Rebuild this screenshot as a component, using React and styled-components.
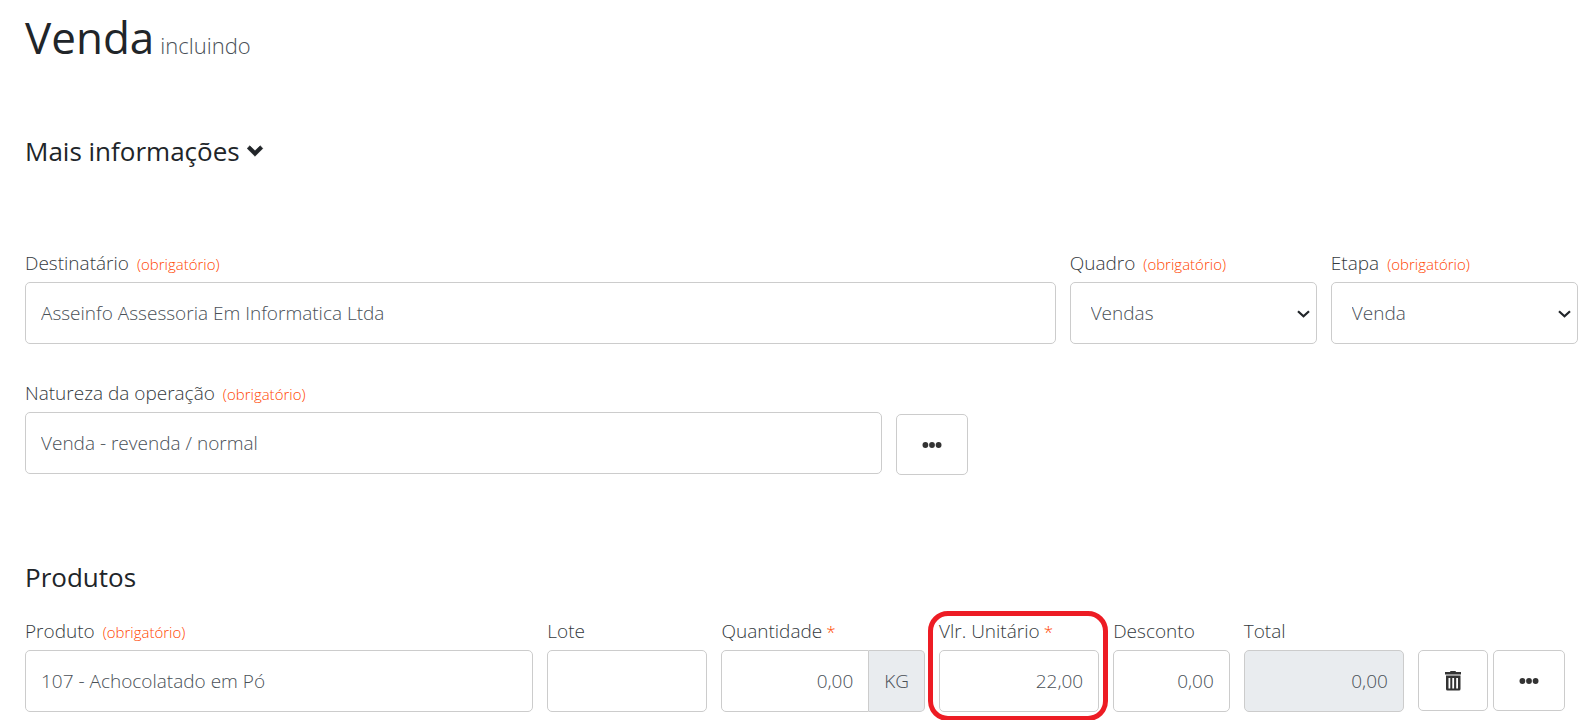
import React, { useState } from "react";
import styled, { createGlobalStyle, css } from "styled-components";

const GlobalStyle = createGlobalStyle`
    *, *::before, *::after {
        box-sizing: border-box;
    }

    body {
        margin: 0;
        background-color: #fff;
        color: #212529;
        font-family: "Open Sans", sans-serif;
        font-size: 19px;
        font-weight: 300;
        line-height: 28px;
    }
`;

function ChevronIcon() {
    return (
        <svg width="18" height="18" viewBox="0 0 18 18" aria-hidden="true">
            <path
                d="M9 14.200 L1.200 6.400 L3.800 3.800 L9 8.800 L14.200 3.800 L16.800 6.400 Z"
                fill="currentColor"
                stroke="currentColor"
                strokeWidth="0.6"
                strokeLinejoin="round"
            />
        </svg>
    );
}

function ArrowIcon() {
    return (
        <svg width="13" height="8" viewBox="0 0 13 8" aria-hidden="true">
            <path d="M1 1.200 L6.500 6.300 L12 1.200" fill="none" stroke="currentColor" strokeWidth="2.2" />
        </svg>
    );
}

function DotsIcon() {
    return (
        <svg width="20" height="20" viewBox="0 0 20 20" fill="currentColor" aria-hidden="true">
            <circle cx="3.4" cy="10" r="2.9" />
            <circle cx="10" cy="10" r="2.9" />
            <circle cx="16.6" cy="10" r="2.9" />
        </svg>
    );
}

function TrashIcon() {
    return (
        <svg width="18" height="20" viewBox="0 0 18 20" fill="currentColor" aria-hidden="true">
            <path d="M6.500 0h5l0.500 1h5v2.500H1V1h5z" />
            <path
                fillRule="evenodd"
                d="M2 4.500h14.500v13.500q0 1.500-1.500 1.500h-11.500Q2 19.500 2 18zM4.500 7v10.500h1.800V7zM8.300 7v10.500h1.800V7zM12.200 7v10.500h1.800V7z"
            />
        </svg>
    );
}

function Field({ id, label, required, mark, span, highlight, children }) {
    return (
        <FieldGroup $span={span}>
            <Label htmlFor={id}>
                {label}
                {required && <Required>(obrigatório)</Required>}
                {mark && <Mark>*</Mark>}
            </Label>
            {children}
            {highlight && <Highlight />}
        </FieldGroup>
    );
}

function App() {

    const [values, setValues] = useState({
        destinatario: "Asseinfo Assessoria Em Informatica Ltda",
        quadro: "Vendas",
        etapa: "Venda",
        natureza: "Venda - revenda / normal",
        produto: "107 - Achocolatado em Pó",
        lote: "",
        quantidade: "0,00",
        valor: "22,00",
        desconto: "0,00",
    });

    const handleChange = (event) => {
        setValues({ ...values, [event.target.name]: event.target.value });
    };

    const bind = (name) => ({
        id: name,
        name,
        value: values[name],
        onChange: handleChange,
    });

    return (
        <>
            <GlobalStyle />
            <Page onSubmit={(event) => event.preventDefault()}>
                <Title>
                    Venda <small>incluindo</small>
                </Title>

                <MoreInfo>
                    <button type="button">
                        Mais informações <ChevronIcon />
                    </button>
                </MoreInfo>

                <Row>
                    <Field id="destinatario" label="Destinatário" required span={24}>
                        <Input type="text" {...bind("destinatario")} />
                    </Field>
                    <Field id="quadro" label="Quadro" required span={6}>
                        <SelectBox>
                            <select {...bind("quadro")}>
                                <option>Vendas</option>
                            </select>
                            <ArrowIcon />
                        </SelectBox>
                    </Field>
                    <Field id="etapa" label="Etapa" required span={6}>
                        <SelectBox>
                            <select {...bind("etapa")}>
                                <option>Venda</option>
                            </select>
                            <ArrowIcon />
                        </SelectBox>
                    </Field>
                </Row>

                <Row>
                    <Field id="natureza" label="Natureza da operação" required span={20}>
                        <Input type="text" {...bind("natureza")} />
                    </Field>
                    <Actions $top={35}>
                        <IconButton type="button" aria-label="Mais opções">
                            <DotsIcon />
                        </IconButton>
                    </Actions>
                </Row>

                <SectionTitle>Produtos</SectionTitle>
                <Row>
                    <Field id="produto" label="Produto" required span={12}>
                        <Input type="text" {...bind("produto")} />
                    </Field>
                    <Field id="lote" label="Lote" span={4}>
                        <Input type="text" {...bind("lote")} />
                    </Field>
                    <Field id="quantidade" label="Quantidade" mark span={5}>
                        <InputGroup>
                            <Input type="text" $number {...bind("quantidade")} />
                            <Addon>KG</Addon>
                        </InputGroup>
                    </Field>
                    <Field id="valor" label="Vlr. Unitário" mark highlight span={4}>
                        <Input type="text" $number {...bind("valor")} />
                    </Field>
                    <Field id="desconto" label="Desconto" span={3}>
                        <Input type="text" $number {...bind("desconto")} />
                    </Field>
                    <Field id="total" label="Total" span={4}>
                        <Input type="text" $number id="total" value="0,00" readOnly />
                    </Field>
                    <Actions $top={33}>
                        <IconButton type="button" aria-label="Excluir produto">
                            <TrashIcon />
                        </IconButton>
                        <IconButton type="button" aria-label="Mais opções do produto">
                            <DotsIcon />
                        </IconButton>
                    </Actions>
                </Row>
            </Page>
        </>
    );
}

const Page = styled.form`
    padding: 9px 18px 8px 25px;
`;

const Title = styled.h1`
    display: flex;
    align-items: baseline;
    gap: 6px;
    margin: 0 0 62px;
    font-size: 44px;
    font-weight: 400;
    line-height: 56px;

    small {
        color: #495057;
        font-size: 22px;
        font-weight: 300;
    }
`;

const heading = css`
    font-size: 26px;
    font-weight: 400;
    line-height: 32px;
`;

const MoreInfo = styled.h2`
    margin: 0 0 82px;
    ${heading}

    button {
        display: flex;
        align-items: center;
        gap: 6px;
        padding: 0;
        border: 0;
        background: none;
        color: inherit;
        font: inherit;
        cursor: pointer;
    }
`;

const SectionTitle = styled.h2`
    margin: 86px 0 24px;
    ${heading}
`;

const Row = styled.div`
    display: grid;
    grid-template-columns: repeat(36, minmax(0, 1fr));
    column-gap: 14px;

    & + & {
        margin-top: 35px;
    }
`;

const FieldGroup = styled.div`
    position: relative;
    grid-column: span ${(props) => props.$span};
`;

const Label = styled.label`
    display: flex;
    align-items: baseline;
    height: 28px;
    margin-bottom: 5px;
    color: #343a40;
    white-space: nowrap;
`;

const Required = styled.span`
    margin-left: 8px;
    color: #ff4500;
    font-size: 15px;
`;

const Mark = styled.span`
    margin-left: 4px;
    color: #ff4500;
    font-size: 17px;
`;

const control = css`
    display: block;
    width: 100%;
    height: 62px;
    border: 1px solid #ccc;
    border-radius: 5px;
    background-color: #fff;
    color: #495057;
    font: inherit;
`;

const Input = styled.input`
    ${control}
    padding: 0 15px;
    text-align: ${(props) => (props.$number ? "right" : "left")};

    &:read-only {
        background-color: #e9ecef;
    }
`;

const SelectBox = styled.div`
    position: relative;

    select {
        ${control}
        appearance: none;
        padding: 0 30px 0 20px;
    }

    /* arrow drawn over the select */
    svg {
        position: absolute;
        top: 28px;
        right: 7px;
        color: #212529;
        pointer-events: none;
    }
`;

const InputGroup = styled.div`
    display: flex;

    input {
        flex: 1;
        min-width: 0;
        border-radius: 5px 0 0 5px;
    }
`;

const Addon = styled.span`
    display: flex;
    align-items: center;
    padding: 0 15px;
    border: 1px solid #ccc;
    border-left: 0;
    border-radius: 0 5px 5px 0;
    background-color: #e9ecef;
    color: #495057;
`;

const Actions = styled.div`
    grid-column: span 4;
    display: flex;
    align-items: flex-start;
    gap: 5px;
    padding-top: ${(props) => props.$top}px;
`;

const IconButton = styled.button`
    display: flex;
    align-items: center;
    justify-content: center;
    height: 61px;
    padding: 0 25px;
    border: 1px solid #ccc;
    border-radius: 5px;
    background-color: #fff;
    color: #333;
    cursor: pointer;
`;

const Highlight = styled.div`
    position: absolute;
    inset: -6px -9px -9px -11px;
    border: 5px solid #ed1c24;
    border-radius: 20px;
    pointer-events: none;
`;

export default App;
